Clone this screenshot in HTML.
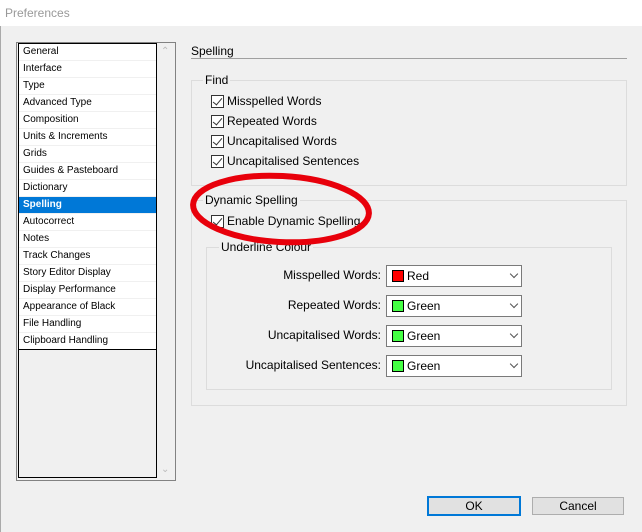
<!DOCTYPE html><html><head><style>
body{margin:0;width:642px;height:532px;background:#f0f0f0;font-family:"Liberation Sans",sans-serif;font-size:12px;color:#000;position:relative;overflow:hidden}
.a{position:absolute}
.title{left:0;top:0;width:642px;height:26px;background:#fff;color:#999;font-size:12px}
.item{position:absolute;left:0;width:139px;height:16px;border-bottom:1px solid #f0f0f0;background:#fff;font-size:10px;line-height:16px;padding-left:4px;box-sizing:border-box;height:17px}
.grp{position:absolute;border:1px solid #dcdcdc}
.lg{position:absolute;background:#f0f0f0;padding:0 2px}
.cb{position:absolute;width:11px;height:11px;border:1px solid #333;background:#fff}
.cb:after{content:"";position:absolute;left:3px;top:0px;width:4px;height:8px;border:solid #333;border-width:0 1.5px 1.5px 0;transform:rotate(40deg)}
.dd{position:absolute;left:386px;width:134px;height:20px;border:1px solid #7a7a7a;background:#fff}
.sw{position:absolute;left:5px;top:4px;width:10px;height:10px;border:1px solid #000}
.dd span{position:absolute;left:20px;top:3px}
.dd i{position:absolute;right:4px;top:5px;width:5px;height:5px;border:solid #555;border-width:0 1px 1px 0;transform:rotate(45deg)}
.lb{position:absolute;right:261px}
.btn{position:absolute;top:497px;width:90px;height:16px;background:#e1e1e1;border:1px solid #adadad;text-align:center;line-height:16px}
</style></head><body>
<div class="a title"><div class="a" style="left:5px;top:6px">Preferences</div></div>
<div class="a" style="left:16px;top:42px;width:158px;height:437px;border:1px solid #828282;border-right:1px solid #828282;background:#f0f0f0"></div>
<div class="a" style="left:18px;top:43px;width:137px;height:433px;border:1px solid #000;background:#f0f0f0;overflow:hidden">
<div class="item" style="top:0">General</div>
<div class="item" style="top:17px">Interface</div>
<div class="item" style="top:34px">Type</div>
<div class="item" style="top:51px">Advanced Type</div>
<div class="item" style="top:68px">Composition</div>
<div class="item" style="top:85px">Units &amp; Increments</div>
<div class="item" style="top:102px">Grids</div>
<div class="item" style="top:119px">Guides &amp; Pasteboard</div>
<div class="item" style="top:136px">Dictionary</div>
<div class="item" style="top:153px;background:#0078d7;color:#fff;font-weight:bold">Spelling</div>
<div class="item" style="top:170px">Autocorrect</div>
<div class="item" style="top:187px">Notes</div>
<div class="item" style="top:204px">Track Changes</div>
<div class="item" style="top:221px">Story Editor Display</div>
<div class="item" style="top:238px">Display Performance</div>
<div class="item" style="top:255px">Appearance of Black</div>
<div class="item" style="top:272px">File Handling</div>
<div class="item" style="top:289px;border-bottom:1px solid #000">Clipboard Handling</div>
</div>
<div class="a" style="left:161px;top:46px;color:#bbb;font-size:10px">&#8963;</div>
<div class="a" style="left:161px;top:464px;color:#bbb;font-size:10px">&#8964;</div>
<div class="a" style="left:191px;top:44px">Spelling</div>
<div class="a" style="left:191px;top:58px;width:436px;height:1px;background:#a0a0a0"></div>
<div class="grp" style="left:191px;top:80px;width:434px;height:104px"></div>
<div class="lg" style="left:203px;top:73px">Find</div>
<div class="cb" style="left:211px;top:95px"></div><div class="a" style="left:227px;top:94px">Misspelled Words</div>
<div class="cb" style="left:211px;top:115px"></div><div class="a" style="left:227px;top:114px">Repeated Words</div>
<div class="cb" style="left:211px;top:135px"></div><div class="a" style="left:227px;top:134px">Uncapitalised Words</div>
<div class="cb" style="left:211px;top:155px"></div><div class="a" style="left:227px;top:154px">Uncapitalised Sentences</div>
<div class="grp" style="left:191px;top:200px;width:434px;height:204px"></div>
<div class="lg" style="left:203px;top:193px">Dynamic Spelling</div>
<div class="cb" style="left:211px;top:215px"></div><div class="a" style="left:227px;top:214px">Enable Dynamic Spelling</div>
<div class="grp" style="left:206px;top:247px;width:404px;height:141px"></div>
<div class="lg" style="left:219px;top:240px">Underline Colour</div>
<div class="lb" style="top:268px">Misspelled Words:</div>
<div class="dd" style="top:265px"><div class="sw" style="background:#f00"></div><span>Red</span><i></i></div>
<div class="lb" style="top:298px">Repeated Words:</div>
<div class="dd" style="top:295px"><div class="sw" style="background:#4f4"></div><span>Green</span><i></i></div>
<div class="lb" style="top:328px">Uncapitalised Words:</div>
<div class="dd" style="top:325px"><div class="sw" style="background:#4f4"></div><span>Green</span><i></i></div>
<div class="lb" style="top:358px">Uncapitalised Sentences:</div>
<div class="dd" style="top:355px"><div class="sw" style="background:#4f4"></div><span>Green</span><i></i></div>
<svg class="a" style="left:0;top:0" width="642" height="532"><ellipse cx="281" cy="209" rx="88" ry="33" transform="rotate(3 281 209)" fill="none" stroke="#e8000b" stroke-width="6"/></svg>
<div class="btn" style="left:427px;border:2px solid #0078d7;top:496px">OK</div>
<div class="btn" style="left:532px">Cancel</div>
<div class="a" style="left:0;top:26px;width:1px;height:506px;background:#aaa"></div>
</body></html>
